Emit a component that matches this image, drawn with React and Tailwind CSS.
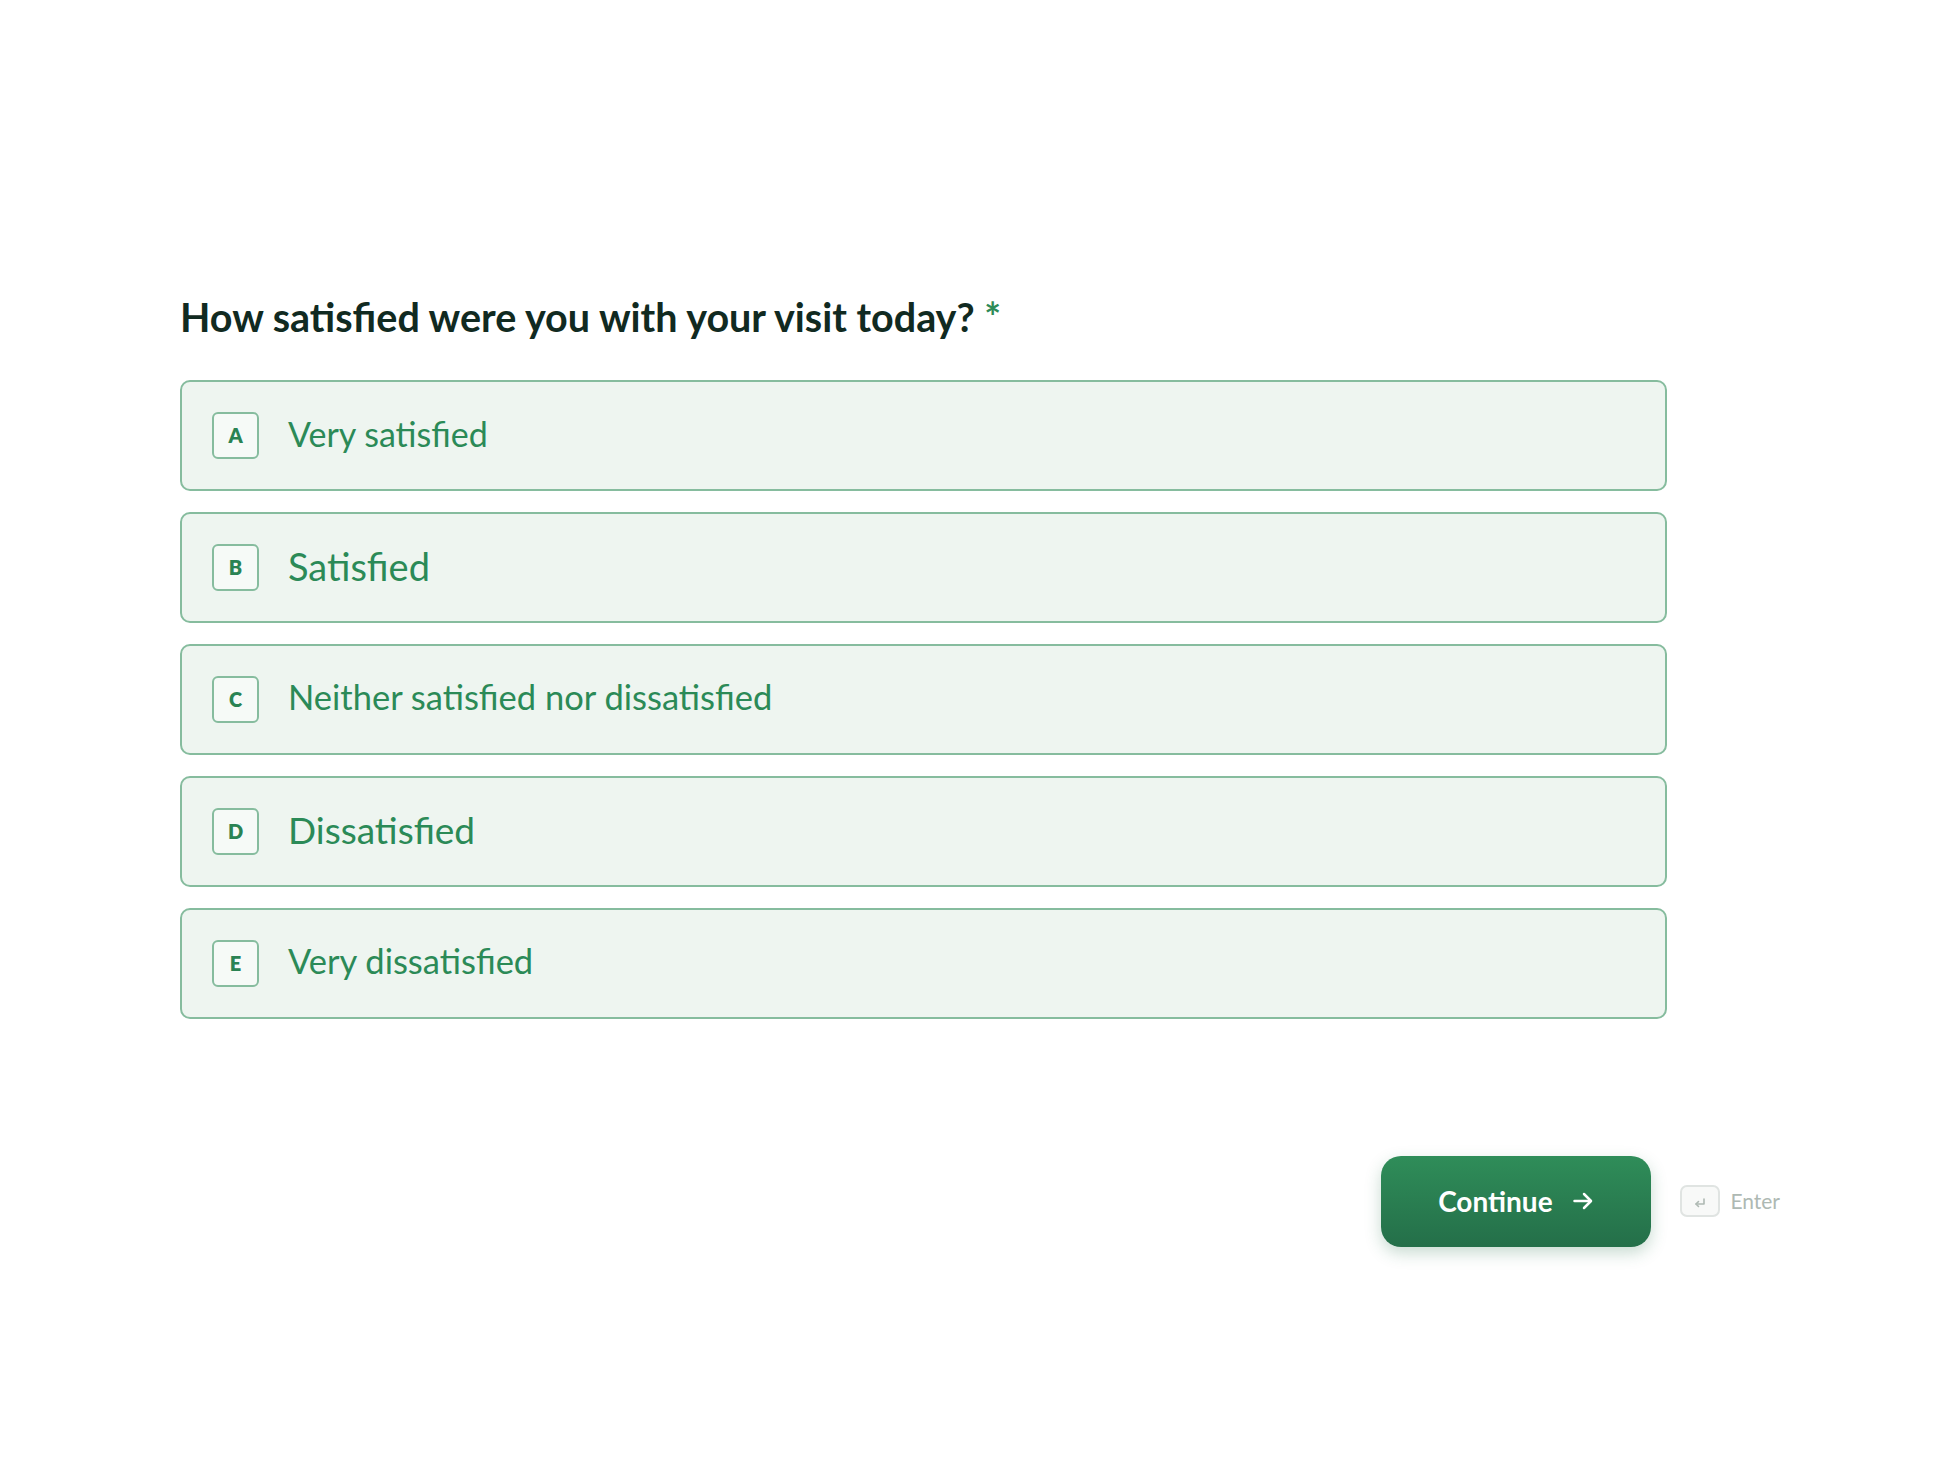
import React from 'react';

const options = [
  { key: 'A', label: 'Very satisfied', size: 'text-[34px]' },
  { key: 'B', label: 'Satisfied', size: 'text-[38px]' },
  { key: 'C', label: 'Neither satisfied nor dissatisfied', size: 'text-[34.5px]' },
  { key: 'D', label: 'Dissatisfied', size: 'text-[37px]' },
  { key: 'E', label: 'Very dissatisfied', size: 'text-[34.5px]' },
];

const ArrowRight = () => (
  <svg width="24" height="24" viewBox="0 0 24 24" fill="none" stroke="currentColor" strokeWidth="2.5" strokeLinecap="round" strokeLinejoin="round">
    <path d="M3.5 12h16" />
    <path d="M13 5l7 7-7 7" />
  </svg>
);

const EnterGlyph = () => (
  <svg width="14" height="12" viewBox="0 0 14 12" fill="none" stroke="currentColor" strokeWidth="1.6" strokeLinecap="round" strokeLinejoin="round">
    <path d="M11 2v5H3" />
    <path d="M5.5 4.5L3 7l2.5 2.5" />
  </svg>
);

export default function App() {
  return (
    <div className="min-h-screen bg-white pl-[180px] pt-[297px]" style={{ fontFamily: 'Lato, "Noto Sans", sans-serif' }}>
      <h1 className="text-[39.5px] leading-none font-bold text-[#112a21]">
        How satisfied were you with your visit today? <span className="text-[#2e8b57]">*</span>
      </h1>

      <div className="mt-[43px] flex flex-col gap-[21px] w-[1487px]">
        {options.map((opt) => (
          <div
            key={opt.key}
            className="h-[111px] flex items-center gap-[29px] px-[30px] bg-[#eef5f0] border-2 border-[#86bc9e] rounded-[10px]"
          >
            <div className="w-[47px] h-[47px] shrink-0 flex items-center justify-center bg-[#f6faf7] border-2 border-[#86bc9e] rounded-[6px] text-[20px] font-extrabold text-[#2a8353]">
              {opt.key}
            </div>
            <span className={`${opt.size} text-[#2b8a57] leading-none -mt-[3px]`}>{opt.label}</span>
          </div>
        ))}
      </div>

      <div className="mt-[137px] w-[1600px] flex justify-end items-center">
        <button className="w-[270px] h-[91px] rounded-[20px] bg-gradient-to-b from-[#2f8d59] to-[#246f49] text-white flex items-center justify-center gap-[18px] shadow-[0_6px_16px_rgba(36,111,73,0.25)]">
          <span className="text-[28px] font-bold">Continue</span>
          <ArrowRight />
        </button>
        <div className="ml-[29px] flex items-center gap-[10px] text-[#aeb9b3]">
          <div className="w-[40px] h-[32px] flex items-center justify-center border-2 border-[#e0e4e2] bg-[#f8f9f8] rounded-[7px] pt-[4px]">
            <EnterGlyph />
          </div>
          <span className="text-[21px]">Enter</span>
        </div>
      </div>
    </div>
  );
}
